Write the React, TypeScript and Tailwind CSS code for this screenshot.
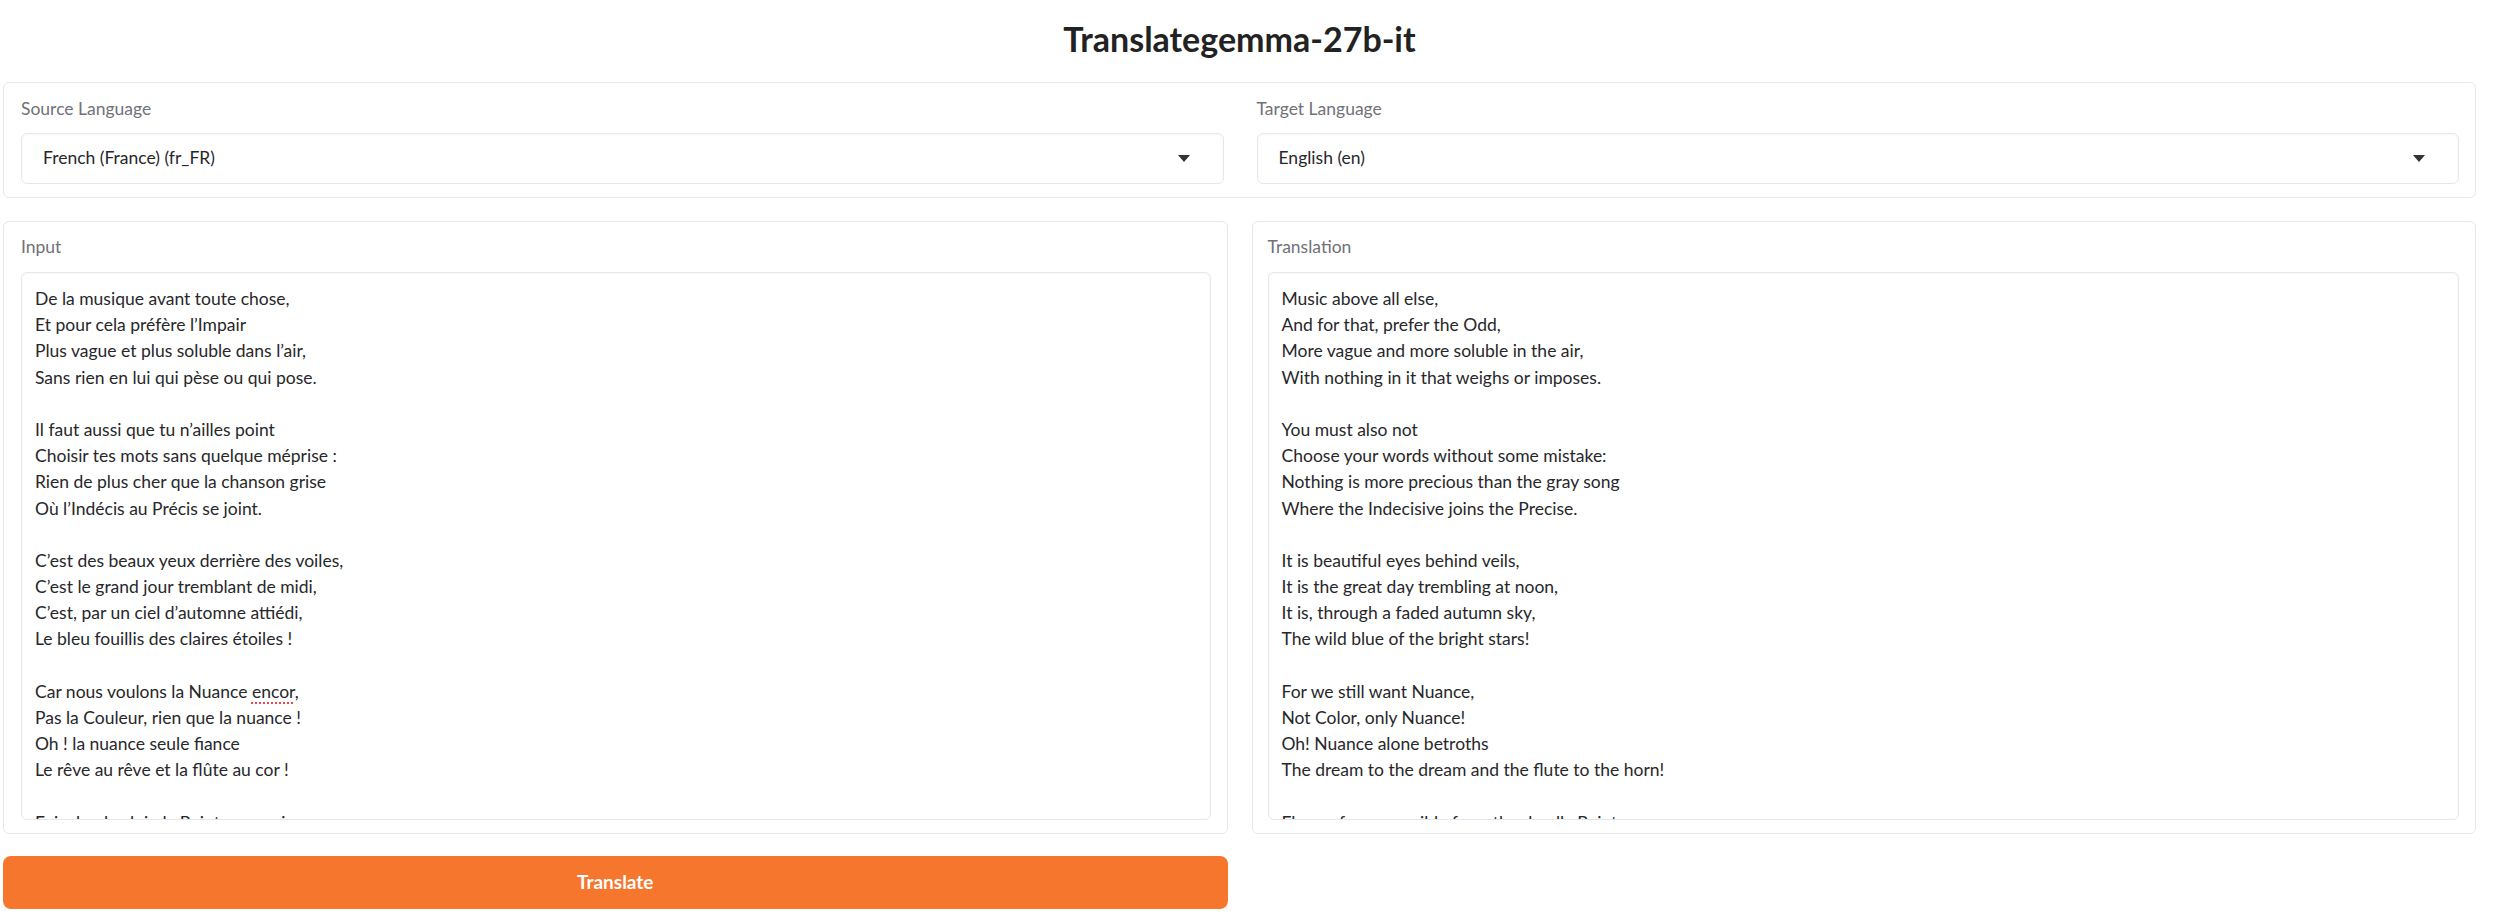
const FONT = "font-['Source_Sans_Pro','Lato',sans-serif]";

const SOURCE = [
  "De la musique avant toute chose,",
  "Et pour cela préfère l’Impair",
  "Plus vague et plus soluble dans l’air,",
  "Sans rien en lui qui pèse ou qui pose.",
  "",
  "Il faut aussi que tu n’ailles point",
  "Choisir tes mots sans quelque méprise :",
  "Rien de plus cher que la chanson grise",
  "Où l’Indécis au Précis se joint.",
  "",
  "C’est des beaux yeux derrière des voiles,",
  "C’est le grand jour tremblant de midi,",
  "C’est, par un ciel d’automne attiédi,",
  "Le bleu fouillis des claires étoiles !",
  "",
  "Car nous voulons la Nuance encor,",
  "Pas la Couleur, rien que la nuance !",
  "Oh ! la nuance seule fiance",
  "Le rêve au rêve et la flûte au cor !",
  "",
  "Fuis du plus loin la Pointe assassine,",
  "L’Esprit cruel et le Rire impur,",
];

const TARGET = [
  "Music above all else,",
  "And for that, prefer the Odd,",
  "More vague and more soluble in the air,",
  "With nothing in it that weighs or imposes.",
  "",
  "You must also not",
  "Choose your words without some mistake:",
  "Nothing is more precious than the gray song",
  "Where the Indecisive joins the Precise.",
  "",
  "It is beautiful eyes behind veils,",
  "It is the great day trembling at noon,",
  "It is, through a faded autumn sky,",
  "The wild blue of the bright stars!",
  "",
  "For we still want Nuance,",
  "Not Color, only Nuance!",
  "Oh! Nuance alone betroths",
  "The dream to the dream and the flute to the horn!",
  "",
  "Flee as far as possible from the deadly Point,",
  "Cruel Wit and impure Laughter,",
];

function Caret() {
  return (
    <svg width="12" height="7" viewBox="0 0 12 7" className="shrink-0">
      <path d="M0 0 L12 0 L6 7 Z" fill="#333" />
    </svg>
  );
}

function Dropdown({ label, value }: { label: string; value: string }) {
  return (
    <div className="flex flex-col">
      <span className="h-[26px] leading-[26px] text-[17.5px] text-[#71717a]">{label}</span>
      <div className="mt-[11px] flex h-[51px] items-center justify-between rounded-[6px] border border-[#e5e7eb] bg-white pl-[21px] pr-[33px] shadow-[inset_0_1px_2px_rgba(0,0,0,0.03)]">
        <span className="text-[17.5px] text-[#27272a]">{value}</span>
        <Caret />
      </div>
    </div>
  );
}

function Line({ text }: { text: string }) {
  if (text === "") return <div className="h-[26.2px]" />;
  if (text.includes("encor,")) {
    const [head] = text.split("encor,");
    return (
      <div className="h-[26.2px] whitespace-pre">
        {head}
        <span className="underline decoration-dotted decoration-[#e5484d] decoration-2 underline-offset-[5px]">encor</span>
        ,
      </div>
    );
  }
  return <div className="h-[26.2px] whitespace-pre">{text}</div>;
}

function TextPanel({ label, lines, padLeft }: { label: string; lines: string[]; padLeft: string }) {
  return (
    <div className={`flex flex-col rounded-[6px] border border-[#e5e7eb] bg-white pt-[12px] pb-[13px] pr-[16px] ${padLeft}`}>
      <span className="h-[26px] leading-[26px] text-[17.5px] text-[#71717a]">{label}</span>
      <div className="mt-[12px] h-[548px] overflow-hidden rounded-[6px] border border-[#e5e7eb] bg-white pl-[13px] pr-[13px] pt-[13px] text-[17.5px] leading-[26.2px] text-[#27272a] shadow-[inset_0_1px_2px_rgba(0,0,0,0.03)]">
        {lines.map((l, i) => (
          <Line key={i} text={l} />
        ))}
      </div>
    </div>
  );
}

export default function App() {
  return (
    <div className={`min-h-[922px] w-full bg-white ${FONT}`}>
      <div className="pl-[3px] pr-[28px]">
        <h1 className="flex h-[82px] items-center justify-center pb-[6px] text-[34px] font-bold text-[#222]">
          Translategemma-27b-it
        </h1>

        <div className="grid grid-cols-2 gap-[33px] rounded-[6px] border border-[#e5e7eb] bg-white pt-[13px] pb-[13px] pl-[17px] pr-[16px]">
          <Dropdown label="Source Language" value="French (France) (fr_FR)" />
          <Dropdown label="Target Language" value="English (en)" />
        </div>

        <div className="mt-[23px] grid grid-cols-2 gap-[24px]">
          <TextPanel label="Input" lines={SOURCE} padLeft="pl-[17px]" />
          <TextPanel label="Translation" lines={TARGET} padLeft="pl-[15px]" />
        </div>

        <div className="mt-[22px] grid grid-cols-2 gap-[24px]">
          <button className="h-[53px] rounded-[8px] bg-[#f7762e] text-[19px] font-bold text-white">
            Translate
          </button>
          <div />
        </div>
      </div>
    </div>
  );
}
